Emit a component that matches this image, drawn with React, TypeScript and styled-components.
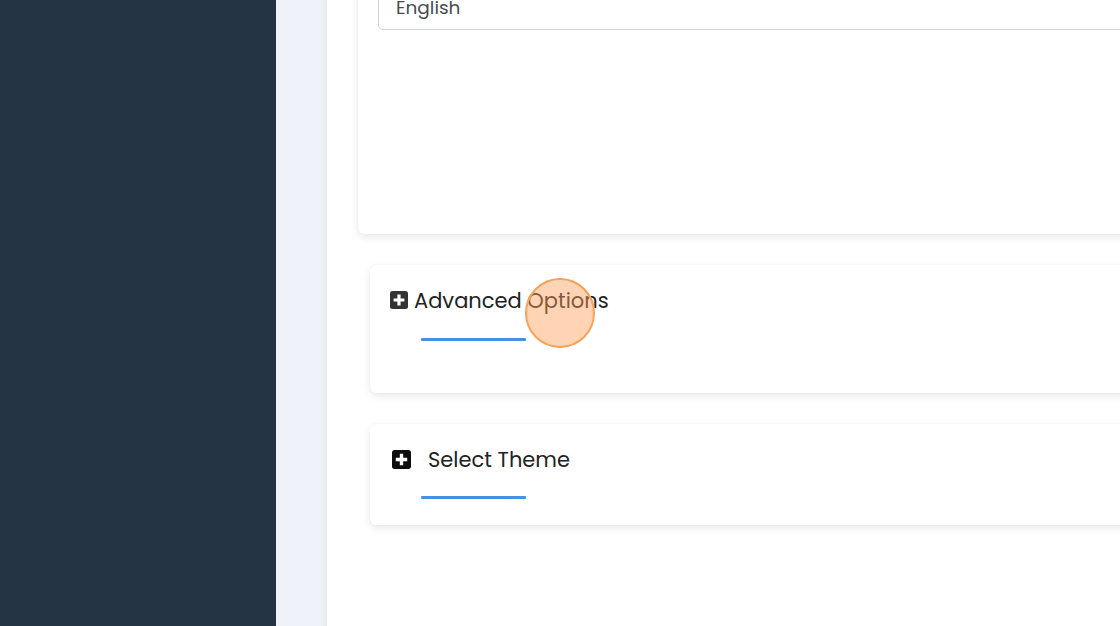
import React from 'react';
import styled, { createGlobalStyle } from 'styled-components';

const GlobalStyle = createGlobalStyle`
  html, body {
    margin: 0;
    padding: 0;
    height: 100%;
    overflow: hidden;
  }
  body {
    font-family: Poppins, Inter, "Noto Sans", sans-serif;
    color: #212529;
  }
`;

const Page = styled.div`
  display: flex;
  height: 626px;
  width: 1120px;
  overflow: hidden;
  position: relative;
`;

const Sidebar = styled.aside`
  width: 276px;
  flex-shrink: 0;
  background: #253444;
`;

const Gutter = styled.div`
  width: 50px;
  flex-shrink: 0;
  background: #eff3f9;
  box-shadow: inset -4px 0 4px -3px rgba(0, 0, 0, 0.06);
  border-right: 1px solid #e8ecf1;
`;

const Main = styled.main`
  flex: 1;
  background: #fff;
  overflow: hidden;
  padding-left: 31px;
`;

const Stack = styled.div`
  display: flex;
  flex-direction: column;
  gap: 31px;
  margin-top: -60px;
`;

const Card = styled.section<{ $indent?: number }>`
  width: 900px;
  margin-left: ${(p) => p.$indent ?? 0}px;
  background: #fff;
  border-radius: 6px;
  box-shadow: 0 3px 8px rgba(0, 0, 0, 0.09), 0 0 2px rgba(0, 0, 0, 0.05);
  box-sizing: border-box;
`;

const LangCard = styled(Card)`
  padding: 20px 20px 204px;
`;

const Select = styled.div`
  height: 46px;
  margin-top: 24px;
  border: 1px solid #ced4da;
  border-radius: 5px;
  padding: 0 17px;
  display: flex;
  align-items: center;
  font-size: 18.5px;
  color: #474c52;
  box-sizing: border-box;
`;

const OptionCard = styled(Card)<{ $bottom: number }>`
  padding: 20px 20px ${(p) => p.$bottom}px;
`;

const Heading = styled.h3<{ $gap: number }>`
  margin: 0;
  height: 30px;
  display: flex;
  align-items: center;
  gap: ${(p) => p.$gap}px;
  font-size: 21px;
  font-weight: 400;
  color: #222;
`;

const Underline = styled.div<{ $top: number }>`
  width: 105px;
  height: 3px;
  margin: ${(p) => p.$top}px 0 0 31px;
  background: #4a90e2;
  border-radius: 1px;
`;

const PlusIcon = ({ size, color }: { size: number; color: string }) => (
  <svg width={size} height={size} viewBox="0 0 18 18">
    <rect x="0" y="0" width="18" height="18" rx="2.5" fill={color} />
    <path d="M7.4 3.6h3.2v3.8h3.8v3.2h-3.8v3.8H7.4v-3.8H3.6V7.4h3.8z" fill="#fff" />
  </svg>
);

const IconSlot = styled.span`
  display: flex;
  margin-left: 2px;
`;

const ClickMark = styled.div`
  position: absolute;
  left: 525px;
  top: 278px;
  width: 70px;
  height: 70px;
  border-radius: 50%;
  box-sizing: border-box;
  border: 2.5px solid #f9a059;
  background: rgba(253, 160, 90, 0.45);
  pointer-events: none;
`;

export default function App() {
  return (
    <>
      <GlobalStyle />
      <Page>
        <Sidebar />
        <Gutter />
        <Main>
          <Stack>
            <LangCard>
              <Select>English</Select>
            </LangCard>
            <OptionCard $indent={12} $bottom={52}>
              <Heading $gap={6}>
                <PlusIcon size={18} color="#333" />
                Advanced Options
              </Heading>
              <Underline $top={23} />
            </OptionCard>
            <OptionCard $indent={12} $bottom={26}>
              <Heading $gap={17}>
                <IconSlot>
                  <PlusIcon size={19} color="#0d0d0d" />
                </IconSlot>
                Select Theme
              </Heading>
              <Underline $top={22} />
            </OptionCard>
          </Stack>
        </Main>
        <ClickMark />
      </Page>
    </>
  );
}
